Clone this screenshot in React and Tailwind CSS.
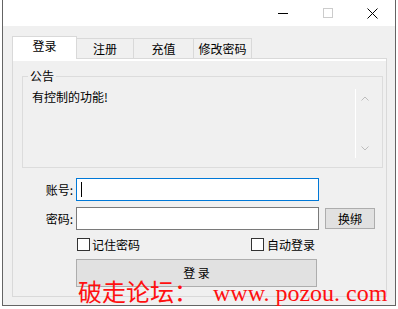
export default function App() {
  return (
    <div className="relative w-[398px] h-[309px] bg-white overflow-hidden text-[12px] text-black font-['Noto_Sans_CJK_SC','Noto_Sans',sans-serif]">
      <div className="ml-[2px] w-[394px] h-[306px] flex flex-col border-x border-b border-[#646464] bg-[#f0f0f0]">
        {/* title bar */}
        <div className="h-[26px] bg-white flex justify-end shrink-0">
          <div className="w-[45px] flex items-center justify-center">
            <div className="w-[10px] h-px bg-black" />
          </div>
          <div className="w-[45px] flex items-center justify-center">
            <div className="w-[10px] h-[10px] border border-[#cccccc]" />
          </div>
          <div className="w-[45px] flex items-center justify-center">
            <svg width="11" height="11" viewBox="0 0 11 11">
              <path d="M0.5 0.5 L10.5 10.5 M10.5 0.5 L0.5 10.5" stroke="#000" strokeWidth="1" fill="none" />
            </svg>
          </div>
        </div>

        {/* body */}
        <div className="pl-[9px] pt-[10px]">
          {/* tabs */}
          <div className="flex items-end relative z-10">
            <div className="w-[65px] h-[23px] mb-[-1px] border-x border-t border-[#d9d9d9] bg-white flex justify-center pt-[1px] leading-[16px]">
              登录
            </div>
            <div className="w-[57px] h-[20px] border-t border-r border-[#d9d9d9] flex justify-center pt-[2px] leading-[16px]">
              注册
            </div>
            <div className="w-[60px] h-[20px] border-t border-r border-[#d9d9d9] flex justify-center pt-[2px] leading-[16px]">
              充值
            </div>
            <div className="w-[58px] h-[20px] border-t border-r border-[#d9d9d9] flex justify-center pt-[2px] leading-[16px]">
              修改密码
            </div>
          </div>

          {/* panel */}
          <div className="w-[375px] h-[239px] border border-[#d9d9d9] flex flex-col">
            <div className="h-[2px] bg-white shrink-0" />
            <div className="pl-[9px] pt-[15px]">
              {/* group box */}
              <div className="relative w-[361px] h-[92px] border border-[#dcdcdc] pl-[6px] pt-[12px]">
                <div className="absolute left-[5px] top-[-9px] px-[2px] bg-[#f0f0f0] leading-[16px]">公告</div>
                <div className="flex w-[344px] h-[69px]">
                  <div className="w-[326px] pl-[3px] leading-[14px] pt-[1px]">有控制的功能!</div>
                  <div className="w-px bg-white" />
                  <div className="w-[17px] flex flex-col items-center justify-between pt-[7px] pb-[7px]">
                    <svg width="8" height="5" viewBox="0 0 8 5">
                      <polyline points="0.5,4.5 4,1 7.5,4.5" stroke="#bdbdbd" strokeWidth="1" fill="none" />
                    </svg>
                    <svg width="8" height="5" viewBox="0 0 8 5">
                      <polyline points="0.5,0.5 4,4 7.5,0.5" stroke="#bdbdbd" strokeWidth="1" fill="none" />
                    </svg>
                  </div>
                </div>
              </div>

              {/* form */}
              <div className="mt-[10px] flex items-center">
                <div className="w-[51px] text-right leading-[16px]">账号:</div>
                <div className="ml-[3px] w-[243px] h-[23px] border border-[#0078d7] bg-white flex items-center">
                  <div className="ml-[4px] w-px h-[15px] bg-black" />
                </div>
              </div>
              <div className="mt-[6px] flex items-center">
                <div className="w-[51px] text-right leading-[16px]">密码:</div>
                <div className="ml-[3px] w-[243px] h-[23px] border border-[#7a7a7a] bg-white" />
                <div className="ml-[6px] w-[50px] h-[21px] border border-[#adadad] bg-[#e1e1e1] flex items-center justify-center leading-[16px]">
                  换绑
                </div>
              </div>
              <div className="mt-[8px] ml-[54px] w-[243px] flex items-center">
                <div className="ml-[1px] flex items-center">
                  <div className="w-[13px] h-[13px] border border-[#333333] bg-white" />
                  <span className="ml-[2px] leading-[13px]">记住密码</span>
                </div>
                <div className="ml-auto mr-[4px] flex items-center">
                  <div className="w-[13px] h-[13px] border border-[#333333] bg-white" />
                  <span className="ml-[3px] leading-[13px]">自动登录</span>
                </div>
              </div>
              <div className="mt-[8px] ml-[54px] w-[241px] h-[28px] border border-[#adadad] bg-[#e1e1e1] flex items-center justify-center leading-[16px]">
                登 录
              </div>
            </div>
          </div>
        </div>
      </div>

      {/* watermark overlay */}
      <div className="absolute left-[78px] top-[279px] whitespace-nowrap text-[24px] leading-[24px] text-[#ff1010] flex items-baseline">
        <span className="font-['Noto_Sans_CJK_SC',sans-serif]">破走论坛：</span>
        <span className="ml-[15px] font-['Liberation_Serif',serif]">www. pozou. com</span>
      </div>
    </div>
  );
}
